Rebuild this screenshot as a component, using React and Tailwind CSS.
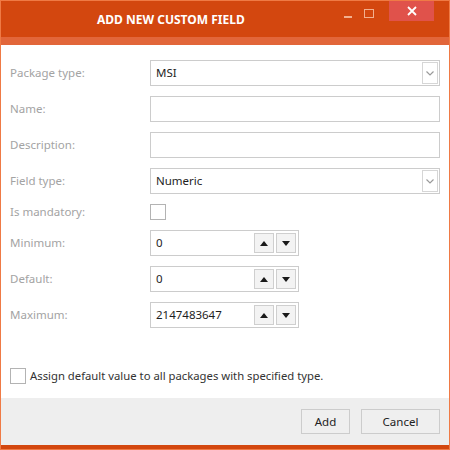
import { useState } from "react";

const labelClass = "h-[26px] flex items-center text-[11.5px] text-[#a3a3a3]";
const boxClass =
  "h-[26px] border border-[#cccccc] bg-white flex items-center px-[5px] text-[11.5px] text-[#1e1e1e]";

function Chevron() {
  return (
    <div className="ml-auto mr-[-4px] h-[22px] w-[16px] border border-[#d6d6d6] flex items-center justify-center">
      <svg width="8" height="5" viewBox="0 0 8 5">
        <path d="M0.5 0.5 L4 4 L7.5 0.5" fill="none" stroke="#9a9a9a" strokeWidth="1.2" />
      </svg>
    </div>
  );
}

function SpinButton({ up }) {
  return (
    <div className="h-[20px] w-[20px] border border-[#cfcfcf] bg-[#f3f3f3] flex items-center justify-center">
      <svg width="8" height="5" viewBox="0 0 8 5">
        {up ? <path d="M0 5 L4 0 L8 5 Z" fill="#1a1a1a" /> : <path d="M0 0 L8 0 L4 5 Z" fill="#1a1a1a" />}
      </svg>
    </div>
  );
}

function NumberBox({ value }) {
  return (
    <div className={`${boxClass} w-[149px] pr-[2px]`}>
      <span>{value}</span>
      <div className="ml-auto flex gap-[2px]">
        <SpinButton up />
        <SpinButton />
      </div>
    </div>
  );
}

function CheckBox() {
  return <div className="h-[16px] w-[16px] border border-[#b3b3b3] bg-white" />;
}

export default function App() {
  const [assign] = useState(false);
  return (
    <div
      className="w-[450px] h-[450px] flex flex-col border border-[#ef7a45] bg-white select-none"
      style={{ fontFamily: '"Noto Sans", "Open Sans", sans-serif' }}
    >
      <div className="h-[36px] bg-[#d3470f] flex items-start relative">
        <div className="absolute left-[96px] top-[10px] text-[12px] font-bold text-white">
          ADD NEW CUSTOM FIELD
        </div>
        <div className="ml-auto flex items-start mr-[15px]">
          <div className="w-[8px] h-[2px] bg-[#f2b08f] mt-[15px] mr-[12px]" />
          <div className="w-[10px] h-[9px] border border-[#f2b08f] mt-[8px] mr-[15px]" />
          <div className="w-[45px] h-[20px] bg-[#e0524b] flex items-center justify-center">
            <svg width="10" height="10" viewBox="0 0 10 10">
              <path d="M1 1 L9 9 M9 1 L1 9" stroke="#ffffff" strokeWidth="1.8" />
            </svg>
          </div>
        </div>
      </div>
      <div className="h-[8px] bg-[#e2663a]" />

      <div className="flex-1 flex flex-col px-[9px] pt-[15px]">
        <div className="grid grid-cols-[140px_290px] gap-y-[10px]">
          <div className={labelClass}>Package type:</div>
          <div className={boxClass}>
            <span>MSI</span>
            <Chevron />
          </div>
          <div className={labelClass}>Name:</div>
          <div className={boxClass} />
          <div className={labelClass}>Description:</div>
          <div className={boxClass} />
          <div className={labelClass}>Field type:</div>
          <div className={boxClass}>
            <span>Numeric</span>
            <Chevron />
          </div>
          <div className="h-[16px] flex items-center text-[11.5px] text-[#a3a3a3]">Is mandatory:</div>
          <div className="h-[16px]">
            <CheckBox />
          </div>
          <div className={labelClass}>Minimum:</div>
          <NumberBox value="0" />
          <div className={labelClass}>Default:</div>
          <NumberBox value="0" />
          <div className={labelClass}>Maximum:</div>
          <NumberBox value="2147483647" />
        </div>

        <div className="mt-[40px] flex items-center gap-[4px]">
          <CheckBox checked={assign} />
          <span className="text-[11.3px] text-[#333333]">
            Assign default value to all packages with specified type.
          </span>
        </div>
      </div>

      <div className="h-[47px] bg-[#eeeeee] flex justify-end items-start pt-[11px] pr-[9px] gap-[11px]">
        <button className="h-[25px] w-[49px] border border-[#cccccc] bg-[#efefef] text-[11.5px] text-[#222222]">
          Add
        </button>
        <button className="h-[25px] w-[79px] border border-[#cccccc] bg-[#efefef] text-[11.5px] text-[#222222]">
          Cancel
        </button>
      </div>
      <div className="h-[4px] bg-[#d3470f]" />
    </div>
  );
}
